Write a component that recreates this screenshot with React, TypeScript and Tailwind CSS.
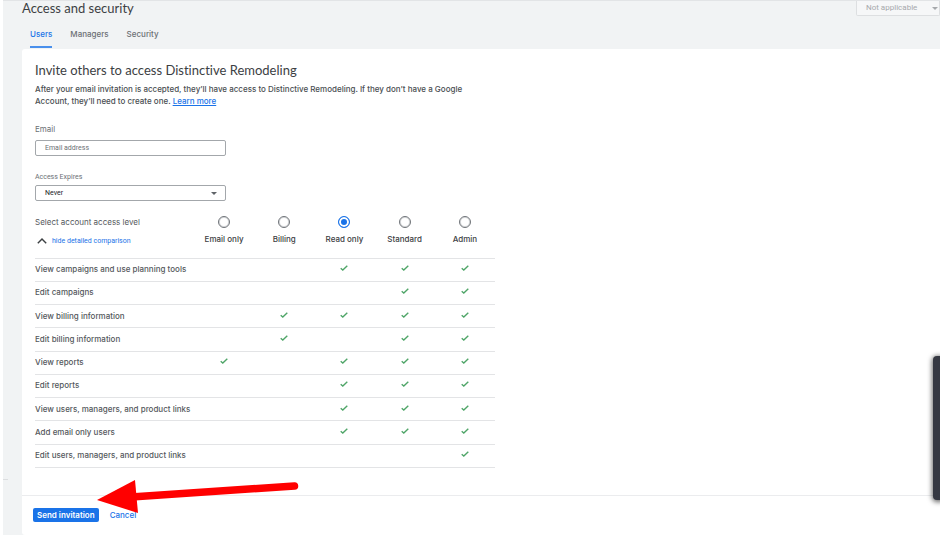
import { useState } from "react";

const levels = ["Email only", "Billing", "Read only", "Standard", "Admin"];

const permissions: { name: string; allowed: string[] }[] = [
  { name: "View campaigns and use planning tools", allowed: ["Read only", "Standard", "Admin"] },
  { name: "Edit campaigns", allowed: ["Standard", "Admin"] },
  { name: "View billing information", allowed: ["Billing", "Read only", "Standard", "Admin"] },
  { name: "Edit billing information", allowed: ["Billing", "Standard", "Admin"] },
  { name: "View reports", allowed: ["Email only", "Read only", "Standard", "Admin"] },
  { name: "Edit reports", allowed: ["Read only", "Standard", "Admin"] },
  { name: "View users, managers, and product links", allowed: ["Read only", "Standard", "Admin"] },
  { name: "Add email only users", allowed: ["Read only", "Standard", "Admin"] },
  { name: "Edit users, managers, and product links", allowed: ["Admin"] },
];

function Check() {
  return (
    <svg viewBox="0 0 8 6" className="mx-auto block h-[6px] w-[8px]" role="img" aria-label="Included">
      <path d="M0.7 3.2 2.8 5 7.3 0.8" fill="none" stroke="#4fa568" strokeWidth="1.4" />
    </svg>
  );
}

function Caret({ className }: { className: string }) {
  return (
    <svg viewBox="0 0 6 3" className={`pointer-events-none absolute h-[3px] w-[6px] ${className}`} aria-hidden="true">
      <path d="M0 0h6L3 3z" fill="currentColor" />
    </svg>
  );
}

function Tabs() {
  const tabs = ["Users", "Managers", "Security"];
  return (
    <nav className="mt-3 flex gap-[18px] pl-2 leading-3 font-medium">
      {tabs.map((tab, i) => (
        <a
          key={tab}
          href="#"
          className={
            i === 0
              ? "border-b-2 border-[#4a90ec] pb-[6px] text-[#1a73e8]"
              : "border-b-2 border-transparent pb-[6px] text-[#6c7075]"
          }
        >
          {tab}
        </a>
      ))}
    </nav>
  );
}

function AccessTable() {
  const [level, setLevel] = useState("Read only");
  return (
    <table className="mt-[9px] h-[258px] w-[460px] table-fixed border-collapse leading-3 text-[#3c4043]">
      <thead>
        <tr className="h-12 border-b border-[#e3e4e6] align-top">
          <th scope="col" className="w-[159px] pt-[6px] text-left font-normal">
            <span className="block text-[#54585c]">Select account access level</span>
            <button
              type="button"
              className="mt-[7px] ml-[2px] flex items-center gap-[5px] font-['Roboto',sans-serif] text-[7px] text-[#1a73e8]"
            >
              <svg viewBox="0 0 10 6" className="h-[6px] w-[10px]" aria-hidden="true">
                <path d="M0.8 5.3 5 1l4.2 4.3" fill="none" stroke="#3c4043" strokeWidth="1.4" />
              </svg>
              hide detailed comparison
            </button>
          </th>
          {levels.map((name) => (
            <th key={name} scope="col" className="pt-[6px] font-medium">
              <label className="flex flex-col items-center gap-[5px]">
                <input
                  type="radio"
                  name="level"
                  checked={level === name}
                  onChange={() => setLevel(name)}
                  className="size-3 appearance-none rounded-full border border-[#6f7378] shadow-[inset_0_0_0_1px_#d5d7d9] checked:border-[#1a73e8] checked:bg-[#1a73e8] checked:shadow-[inset_0_0_0_2px_white]"
                />
                {name}
              </label>
            </th>
          ))}
        </tr>
      </thead>
      <tbody>
        {permissions.map((row) => (
          <tr key={row.name} className="border-b border-[#e3e4e6]">
            <th scope="row" className="pb-px text-left font-medium whitespace-nowrap text-[#54585c]">
              {row.name}
            </th>
            {levels.map((name) => (
              <td key={name} className="pb-[3px]">{row.allowed.includes(name) && <Check />}</td>
            ))}
          </tr>
        ))}
      </tbody>
    </table>
  );
}

export default function App() {
  return (
    <div className="relative flex min-h-screen overflow-hidden bg-white pb-[5px] pl-[3px] font-['Inter',sans-serif] text-[8px]">
      <aside className="flex w-[19px] shrink-0 flex-col justify-end border-t border-[#e2e4e6] bg-[#f1f3f4]">
        <div className="h-14 w-[5px] border-t border-[#dcdee0]" />
      </aside>
      <div className="flex min-w-0 flex-1 flex-col border-t border-[#e2e4e6] bg-[#f1f3f4]">
        <header className="flex items-start justify-between">
          <h1 className="font-['Lato',sans-serif] text-[13px] leading-[14px] text-[#3c4043]">Access and security</h1>
          <div className="relative">
            <select
              disabled
              aria-label="Account status"
              className="block h-[15px] w-[84px] appearance-none rounded-b-xs border border-t-0 border-[#dddfe1] bg-[#f6f7f8] pl-[9px] font-['Roboto',sans-serif] leading-3 text-[#a6a9ac] opacity-100"
            >
              <option>Not applicable</option>
            </select>
            <Caret className="top-[6px] right-[2px] text-[#a6a9ac]" />
          </div>
        </header>
        <Tabs />
        <form className="mt-px flex flex-1 flex-col rounded-l-[3px] bg-white" onSubmit={(e) => e.preventDefault()}>
          <div className="flex-1 pl-[13px]">
            <h2 className="mt-[13px] font-['Lato',sans-serif] text-[13px] leading-4 text-[#3c4043] [font-variant-ligatures:none]">
              Invite others to access Distinctive Remodeling
            </h2>
            <p className="mt-[5px] w-[440px] leading-3 font-medium text-[#4a4e52]">
              After your email invitation is accepted, they’ll have access to Distinctive Remodeling. If they don’t have
              a Google Account, they’ll need to create one.{" "}
              <a href="#" className="text-[#1a73e8] underline">
                Learn more
              </a>
            </p>
            <label htmlFor="email" className="mt-4 block leading-3 text-[#6c7075]">
              Email
            </label>
            <input
              id="email"
              type="email"
              placeholder="Email address"
              className="mt-[5px] block h-4 w-[191px] rounded-xs border border-[#a3a7ab] px-[9px] font-['Roboto',sans-serif] text-[7px] leading-3 placeholder:text-[#6c7075]"
            />
            <label htmlFor="expires" className="mt-[15px] block font-['Roboto',sans-serif] text-[7px] leading-3 text-[#6c7075]">
              Access Expires
            </label>
            <div className="relative mt-[2px] w-[191px]">
              <select
                id="expires"
                className="block h-4 w-full appearance-none rounded-xs border border-[#a3a7ab] bg-white px-[9px] font-['Roboto',sans-serif] text-[7px] leading-3 text-[#202124]"
              >
                <option>Never</option>
              </select>
              <Caret className="top-[7px] right-[9px] text-[#5f6368]" />
            </div>
            <AccessTable />
          </div>
          <footer className="flex h-10 items-center gap-[11px] border-t border-[#ebecee] pb-[2px] pl-[11px] leading-3 font-medium">
            <button type="submit" className="h-[14px] rounded-xs bg-[#1a73e8] px-1 font-semibold text-white">
              Send invitation
            </button>
            <button type="button" className="text-[#1a73e8]">
              Cancel
            </button>
          </footer>
        </form>
      </div>
      <div className="absolute top-[356px] -right-1 h-36 w-[11px] rounded-sm bg-[#353842] shadow-[0_1px_5px_1px_rgba(0,0,0,0.6)]" />
      <svg viewBox="0 0 202 34" className="pointer-events-none absolute top-[480px] left-[97px] h-[34px] w-[202px]" aria-hidden="true">
        <path d="M38 16.800 197.500 6" stroke="#ff0000" strokeWidth="7.500" strokeLinecap="round" />
        <path d="M0 20 38 0 41 33z" fill="#ff0000" />
      </svg>
    </div>
  );
}
